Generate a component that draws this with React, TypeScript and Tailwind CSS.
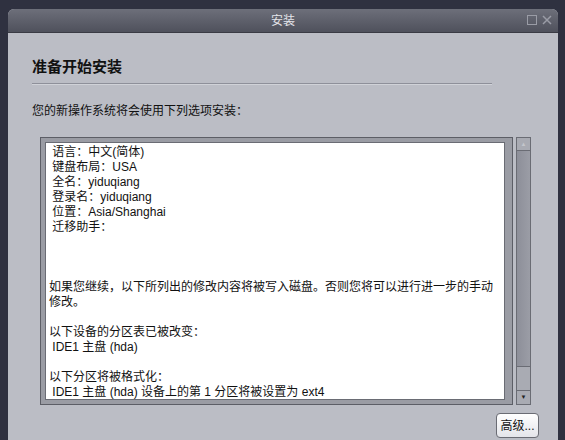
import React from 'react';

const LINES = [
  ' 语言：中文(简体)',
  ' 键盘布局：USA',
  ' 全名：yiduqiang',
  ' 登录名：yiduqiang',
  ' 位置：Asia/Shanghai',
  ' 迁移助手：',
  '',
  '',
  '',
  '如果您继续，以下所列出的修改内容将被写入磁盘。否则您将可以进行进一步的手动',
  '修改。',
  '',
  '以下设备的分区表已被改变：',
  ' IDE1 主盘 (hda)',
  '',
  '以下分区将被格式化：',
  ' IDE1 主盘 (hda) 设备上的第 1 分区将被设置为 ext4',
  ' IDE1 主盘 (hda) 设备上的第 5 分区将被设置为 swap',
];

export default function App() {
  return (
    <div
      className="w-[565px] h-[440px] bg-[#2f3140] overflow-hidden pt-[9px] pl-[8px]"
      style={{ fontFamily: '"Liberation Sans", "Noto Sans CJK SC", sans-serif' }}
    >
      <div className="w-[550px] h-[440px] rounded-t-[6px] overflow-hidden bg-[#bbbdc5] flex flex-col">
        {/* 标题栏 */}
        <div className="h-[24px] bg-gradient-to-b from-[#6d6f7a] to-[#4f515c] border-b border-[#3a3b44] flex items-center relative">
          <div className="flex-1 text-center text-[12px] text-[#e4e5ea]">安装</div>
          <div className="absolute right-[6px] top-[6px] flex items-center gap-[5px] text-[#9a9ca6]">
            <div className="w-[10px] h-[10px] border border-[#9a9ca6]" />
            <svg width="10" height="10" viewBox="0 0 10 10">
              <path d="M1 1L9 9M9 1L1 9" stroke="#9a9ca6" strokeWidth="1.5" />
            </svg>
          </div>
        </div>

        <div className="px-[24px] pt-[24px]">
          <h1 className="text-[15px] font-bold text-[#111] leading-[20px]">准备开始安装</h1>
          <div className="mt-[6px] h-[1px] bg-[#8e909a] w-[460px] border-b border-[#d0d2d8] box-content" />
          <p className="mt-[18px] text-[12px] text-[#111] leading-[16px]">您的新操作系统将会使用下列选项安装：</p>

          <div className="mt-[18px] ml-[8px] flex gap-[3px]">
            <div className="w-[473px] h-[268px] bg-[#9a9ca4] border border-[#5c5e66] p-[4px] pr-[7px]">
              <div className="bg-white h-full overflow-hidden border border-[#6a6c74] pt-[2px] pl-[3px]">
                {LINES.map((l, i) => (
                  <div key={i} className="text-[12px] leading-[15px] h-[15px] text-[#111] whitespace-pre">
                    {l}
                  </div>
                ))}
              </div>
            </div>
            <div className="w-[15px] h-[268px] border border-[#6a6c74] bg-[#a9abb3] flex flex-col">
              <div className="h-[13px] flex items-center justify-center text-[6px] text-[#c4c6cc] border-b border-[#6a6c74]">▲</div>
              <div className="flex-1 bg-gradient-to-r from-[#8d8f99] to-[#9b9da6] border-b border-[#6a6c74]" />
              <div className="h-[24px] border-b border-[#6a6c74]" />
              <div className="h-[13px] flex items-center justify-center text-[6px] text-[#222]">▼</div>
            </div>
          </div>

          <div className="flex justify-end mt-[8px] w-[507px]">
            <button className="h-[25px] w-[43px] rounded-[4px] border border-[#6a6c74] bg-gradient-to-b from-white to-[#e4e5ea] text-[12px] text-[#111]">
              高级...
            </button>
          </div>
        </div>
      </div>
    </div>
  );
}
